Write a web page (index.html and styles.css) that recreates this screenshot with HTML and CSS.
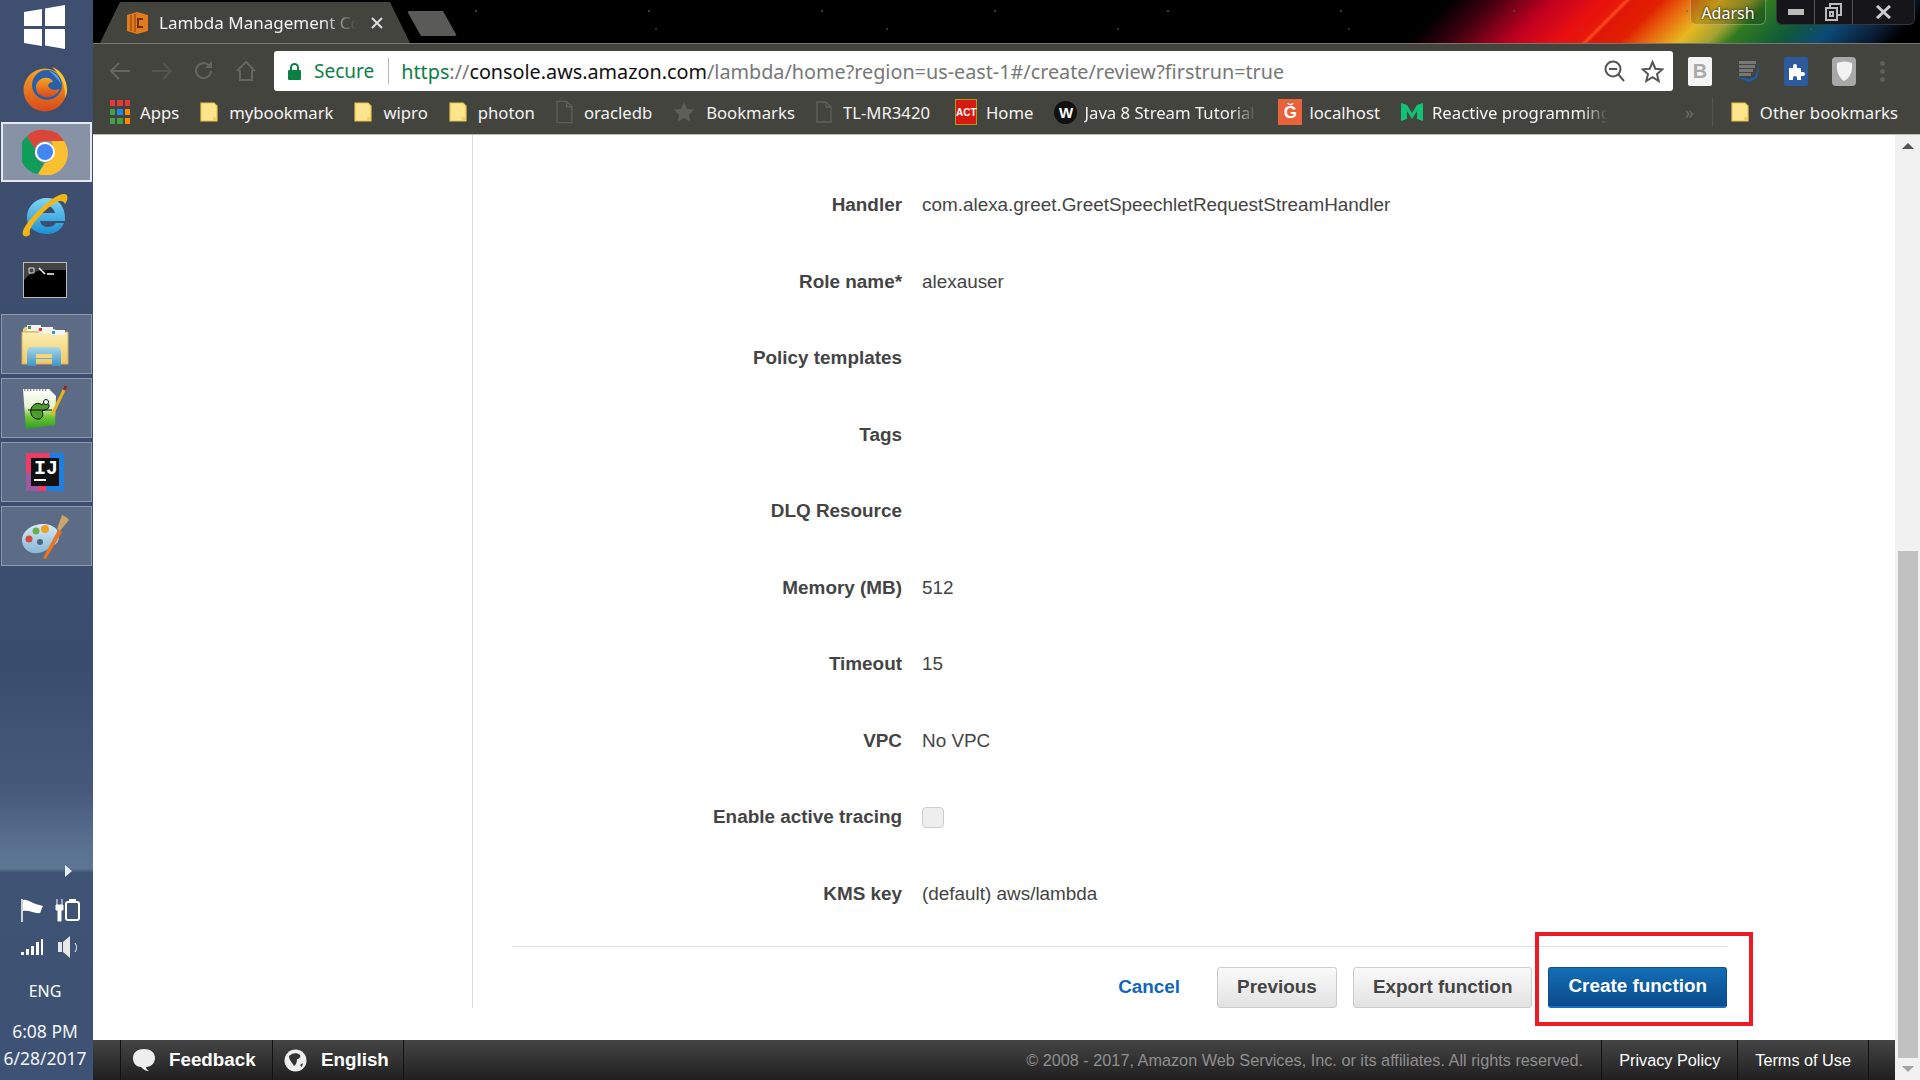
FILE: index.html
```html
<!DOCTYPE html>
<html lang="en">
<head>
<meta charset="utf-8">
<title>Lambda Management Console</title>
<link rel="stylesheet" href="styles.css">
</head>
<body>
<svg class="defs" width="0" height="0" aria-hidden="true">
  <defs>
    <linearGradient id="fx" x1="0" y1="0" x2="0" y2="1"><stop offset="0" stop-color="#f5a623"/><stop offset="1" stop-color="#d9491c"/></linearGradient>
    <linearGradient id="ie" x1="0" y1="0" x2="0" y2="1"><stop offset="0" stop-color="#7fd6f5"/><stop offset="1" stop-color="#1c8fd6"/></linearGradient>
    <linearGradient id="np" x1="0" y1="0" x2="0" y2="1"><stop offset="0" stop-color="#ffffff"/><stop offset=".45" stop-color="#e4f4cf"/><stop offset=".7" stop-color="#6cc52f"/><stop offset="1" stop-color="#2f9a2a"/></linearGradient>
    <linearGradient id="fd" x1="0" y1="0" x2="0" y2="1"><stop offset="0" stop-color="#fbeeb2"/><stop offset="1" stop-color="#efc968"/></linearGradient>
    <linearGradient id="gl" x1="0" y1="0" x2="0" y2="1"><stop offset="0" stop-color="#a8d8ea"/><stop offset="1" stop-color="#3f94c6"/></linearGradient>
    <linearGradient id="pa" x1="0" y1="0" x2="0" y2="1"><stop offset="0" stop-color="#d8ecf7"/><stop offset="1" stop-color="#86b6d6"/></linearGradient>
  </defs>
  <symbol id="folder" viewBox="0 0 18 20"><path d="M1 1h13l3 3v15H1z" fill="#fde58d" stroke="#e9c24e" stroke-width="1.2"/><path d="M13 19v-4h4v4z" fill="#f3cf62"/></symbol>
  <symbol id="doc" viewBox="0 0 16 22"><path d="M1 1h9l5 5v15H1zM10 1v5h5" fill="none" stroke="#5f5f5a" stroke-width="1.3"/></symbol>
</svg>
<div class="desktop">
  <aside class="dock">
    <div class="dock-item first">
      <svg width="44" height="44" viewBox="0 0 44 44"><path d="M1 7l18-3v17H1zM22 3.500L42 0v21H22zM1 24h18v17L1 38zM22 24h20v20l-20-3.500z" fill="#fff"/></svg>
    </div>
    <div class="dock-item">
      <svg width="46" height="54" viewBox="0 0 46 54">
        <circle cx="23" cy="29" r="21.500" fill="url(#fx)"/>
        <circle cx="25" cy="24" r="15" fill="#2a5fa8"/>
        <path d="M27 10c6 1 11 6 12 13-3-5-7-9-12-13z" fill="#5f9fe0"/>
        <path d="M22 17c5-1 8 1 9 4-3 0-5 2-5 4 2 4 7 5 12 3-3 6-9 9-15 8-6-1-9-5-9-10 0-4 3-8 8-9z" fill="url(#fx)"/>
        <path d="M30 6c9 3 15 12 15 23 0 3-1 6-2 8 1-12-4-23-13-31z" fill="#fcc72f"/>
      </svg>
    </div>
    <div class="dock-item tile active">
      <svg width="46" height="46" viewBox="0 0 46 46">
        <path d="M23 1a22 22 0 0 1 19 11H23a11 11 0 0 0-10.500 7.500L5 7A22 22 0 0 1 23 1z" fill="#db4437"/>
        <path d="M5 7l8 13a11 11 0 0 0 9 14l-6 11A22 22 0 0 1 5 7z" fill="#0f9d58"/>
        <path d="M42 12a22 22 0 0 1-26 33l7-11a11 11 0 0 0 8-14 11 11 0 0 0-2-8z" fill="#fbc02d"/>
        <circle cx="23" cy="23" r="10" fill="#fff"/><circle cx="23" cy="23" r="8" fill="#4285f4"/>
      </svg>
    </div>
    <div class="dock-item">
      <svg width="46" height="46" viewBox="0 0 46 46">
        <path d="M5 25C5 13 14 5 25 5c11 0 18 8 18 20v3H18c1 4 4 6 8 6 3 0 6-1 8-4h8c-3 7-9 11-16 11C14 41 5 35 5 25zM18 20h15c-1-4-4-7-8-7s-6 3-7 7z" fill="url(#ie)"/>
        <path d="M1 42C-3 34 30 1 42 1c5 0 4 6 1 10-2-5-8-4-18 5C14 26 6 36 8 41c-1 3-6 3-7 1z" fill="#f2b616"/>
      </svg>
    </div>
    <div class="dock-item">
      <svg width="44" height="36" viewBox="0 0 44 36"><rect x=".5" y=".5" width="43" height="35" fill="#000" stroke="#bbb"/><path d="M1 1h42v7H20C12 9 6 12 1 18z" fill="#444"/><path d="M16 6l6 6" stroke="#fff" stroke-width="1.500"/><path d="M24 12h7" stroke="#fff" stroke-width="1.500"/><path d="M6 6h5v5H6z" fill="none" stroke="#ddd"/></svg>
    </div>
    <div class="dock-item tile">
      <svg width="48" height="46" viewBox="0 0 48 46">
        <path d="M2 8l2-2h12l2 2h16l2 3H2z" fill="#e9cd83"/>
        <path d="M1 11h46v32H1z" fill="url(#fd)" stroke="#d2ae5e"/>
        <path d="M6 4h14v6H6zM18 6h14v6H18zM30 9h14v5H30z" fill="#f4f4f4"/>
        <path d="M7 5h3v3H7z" fill="#3c9a3c"/><path d="M18 7h3v3h-3z" fill="#d33"/><path d="M31 10h3v3h-3z" fill="#39c"/>
        <path d="M6 45V31c0-3 2-5 5-5h24c3 0 5 2 5 5v14h-9v-7H15v7z" fill="url(#gl)"/>
        <path d="M15 37h16v-4H15z" fill="#f2d77c"/>
      </svg>
    </div>
    <div class="dock-item tile">
      <svg width="46" height="46" viewBox="0 0 46 46">
        <path d="M1 4h26l7 7-1 29-29 4z" fill="url(#np)"/>
        <path d="M2 5h24" stroke="#777" stroke-width="1.500" stroke-dasharray="1.500 1.500"/>
        <path d="M9 24c2-6 8-7 11-4 1-4 8-3 7 2-1 3-5 3-7 4 2 4 0 9-5 8-5-1-7-5-6-10z" fill="#4b9b2e" stroke="#111"/>
        <circle cx="24" cy="17" r="2.500" fill="#fff" stroke="#111"/><path d="M6 25h24" stroke="#111"/>
        <path d="M30 30L43 3" stroke="#e8b417" stroke-width="3"/><path d="M42 5l2-4" stroke="#8a2a2a" stroke-width="3"/>
      </svg>
    </div>
    <div class="dock-item tile">
      <svg width="38" height="38" viewBox="0 0 38 38">
        <path d="M0 0h24v10H38v28H12l-12-2z" fill="#ee3b68"/><path d="M24 0h14v38H20z" fill="#1f7fe0"/><path d="M0 20h12v18H0z" fill="#9a5aa0"/>
        <rect x="5" y="5" width="28" height="28" fill="#111"/>
        <rect x="8" y="26" width="12" height="2" fill="#fff"/>
        <text x="8" y="21" class="ij-text">IJ</text>
      </svg>
    </div>
    <div class="dock-item tile">
      <svg width="48" height="48" viewBox="0 0 48 48">
        <path d="M1 28c0-10 12-17 23-16 8 1 14 5 14 12 0 9-6 9-10 12-3 3-9 6-16 5C6 40 1 35 1 28z" fill="url(#pa)"/>
        <circle cx="8" cy="27" r="3.500" fill="#d84a3a"/><circle cx="15" cy="19" r="3.500" fill="#6ab04a"/><circle cx="24" cy="17" r="4" fill="#f0a020"/><circle cx="19" cy="30" r="3" fill="#4d6680"/>
        <path d="M22 46l15-28 4 2-16 27z" fill="#e9761c"/><path d="M36 17l5-14c3 1 6 3 7 5l-9 11z" fill="#c9a56b"/>
      </svg>
    </div>
    <div class="sys">
      <div class="sys-arrow"></div>
      <div class="tray">
        <svg width="24" height="24" viewBox="0 0 24 24"><path d="M2 1v23" stroke="#fff" stroke-width="1.500"/><path d="M3 2c5-1 9 4 20 6-2 3-2 6-3 7-5 1-10-3-17-2z" fill="#fff"/></svg>
        <svg width="26" height="24" viewBox="0 0 26 24"><path d="M2 1v6M7 1v6M1 7h7v5H6v11H3V12H1z" fill="#fff" stroke="#fff" stroke-width="1"/><rect x="11" y="4" width="13" height="18" rx="2" fill="none" stroke="#fff" stroke-width="2"/><path d="M14 1h7v3h-7z" fill="#fff"/></svg>
        <svg width="24" height="18" viewBox="0 0 24 18"><path d="M1 14h3v3H1zM6 11h3v6H6zM11 8h3v9h-3zM16 4h3v13h-3zM21 1h2v16h-2z" fill="#fff"/></svg>
        <svg width="22" height="24" viewBox="0 0 22 24"><path d="M1 7h4v10H1zM6 7l7-6v22l-7-6z" fill="#e8e8e8"/><path d="M18 8c2 3 2 6 0 9" stroke="#fff" fill="none"/></svg>
      </div>
      <div class="lang">ENG</div>
      <div class="clock">6:08 PM</div>
      <div class="clock">6/28/2017</div>
    </div>
  </aside>

  <main class="browser">
    <header class="titlebar">
      <div class="tab">
        <svg class="tab-icon" width="21" height="22" viewBox="0 0 21 22"><path d="M0 3l10-3 11 3v16l-11 3-10-3z" fill="#e07b1f"/><path d="M4 3v16M8 2v18" stroke="#a9530f" stroke-width="1.500"/><path d="M16 7h-5v8h5" stroke="#6b3208" stroke-width="2" fill="none"/></svg>
        <span class="tab-title">Lambda Management Console</span>
        <svg class="tab-close" width="12" height="12" viewBox="0 0 12 12"><path d="M1 1l10 10M11 1L1 11" stroke="#ddd" stroke-width="2"/></svg>
      </div>
      <div class="newtab"></div>
      <div class="user">Adarsh</div>
      <div class="winctl">
        <div class="win-btn"><svg width="16" height="6" viewBox="0 0 16 6"><rect width="16" height="6" fill="#bbb"/></svg></div>
        <div class="win-btn"><svg width="17" height="18" viewBox="0 0 17 18"><path d="M5 4V1h11v11h-3M1 5h11v12H1zM5 9h3v4H5z" fill="none" stroke="#bbb" stroke-width="2"/></svg></div>
        <div class="win-btn wide"><svg width="15" height="14" viewBox="0 0 15 14"><path d="M1 1l13 12M14 1L1 13" stroke="#ccc" stroke-width="3"/></svg></div>
      </div>
    </header>

    <div class="toolbar">
      <div class="nav-btn"><svg width="20" height="18" viewBox="0 0 20 18"><path d="M20 9H2M9 1L1 9l8 8" fill="none" stroke="#66665f" stroke-width="2"/></svg></div>
      <div class="nav-btn"><svg width="20" height="18" viewBox="0 0 20 18"><path d="M0 9h18M11 1l8 8-8 8" fill="none" stroke="#55554f" stroke-width="2"/></svg></div>
      <div class="nav-btn"><svg width="20" height="20" viewBox="0 0 20 20"><path d="M17 10a7.500 7.500 0 1 1-2-5.500" fill="none" stroke="#66665f" stroke-width="2"/><path d="M18 0v7h-7z" fill="#66665f"/></svg></div>
      <div class="nav-btn"><svg width="20" height="20" viewBox="0 0 20 20"><path d="M1 10l9-9 9 9M4 9v10h12V9" fill="none" stroke="#66665f" stroke-width="2"/></svg></div>
      <div class="omnibox">
        <svg class="lock" width="13" height="17" viewBox="0 0 13 17"><path d="M3 7V4.500a3.500 3.500 0 0 1 7 0V7" fill="none" stroke="#0b8043" stroke-width="2"/><rect y="7" width="13" height="10" rx="1" fill="#0b8043"/></svg>
        <span class="secure">Secure</span>
        <span class="omni-sep"></span>
        <span class="url"><span class="u-https">https</span><span class="u-dim">://</span><span class="u-host">console.aws.amazon.com</span><span class="u-dim">/lambda/home?region=us-east-1#/create/review?firstrun=true</span></span>
        <svg class="omni-zoom" width="21" height="22" viewBox="0 0 21 22"><circle cx="9" cy="9" r="7.500" fill="none" stroke="#555" stroke-width="2"/><path d="M5 9h8M14 14l6 7" stroke="#555" stroke-width="2"/></svg>
        <svg class="omni-star" width="23" height="23" viewBox="0 0 23 23"><path d="M11.500 2l2.800 6.700 7.200.6-5.500 4.700 1.700 7-6.200-3.800L5.300 21 7 14 1.500 9.300l7.200-.6z" fill="none" stroke="#555" stroke-width="2"/></svg>
      </div>
      <div class="exts">
        <div class="ext ext-b">B</div>
        <svg width="24" height="26" viewBox="0 0 24 26"><path d="M3 3h17v3H3zM3 7h16v3H3zM3 11h14v3H3zM3 15h12v3H3z" fill="#777"/><path d="M0 19l13 5 8-4 3-15-5 14-6 2z" fill="#1460b0"/></svg>
        <div class="ext ext-puzzle"><svg width="20" height="20" viewBox="0 0 20 20"><path d="M3 7h4V5a2 2 0 0 1 4 0v2h4v4h2a2 2 0 0 1 0 4h-2v4h-4v-2a2 2 0 0 0-4 0v2H3z" fill="#fff"/></svg></div>
        <div class="ext ext-shield"><svg width="18" height="22" viewBox="0 0 18 22"><path d="M2 3c5-2 10-2 15 0 1 8-2 15-8 18C4 18 1 11 2 3z" fill="#f2f2f2"/></svg></div>
        <div class="menu-dots"><i></i><i></i><i></i></div>
      </div>
    </div>

    <nav class="bookmarks">
      <div class="bm apps"><svg width="20" height="24" viewBox="0 0 20 24"><path d="M0 0h5v6H0zM7 0h6v6H7zM15 0h5v6h-5z" fill="#e53935"/><path d="M0 9h5v6H0z" fill="#43a047"/><path d="M7 9h6v6H7z" fill="#1e88e5"/><path d="M15 9h5v6h-5z" fill="#fb8c00"/><path d="M0 18h5v6H0zM7 18h6v6H7z" fill="#43a047"/><path d="M15 18h5v6h-5z" fill="#fb8c00"/></svg><span>Apps</span></div>
      <div class="bm"><svg width="18" height="26"><use href="#folder"/></svg><span>mybookmark</span></div>
      <div class="bm"><svg width="18" height="26"><use href="#folder"/></svg><span>wipro</span></div>
      <div class="bm"><svg width="18" height="26"><use href="#folder"/></svg><span>photon</span></div>
      <div class="bm"><svg width="17" height="24"><use href="#doc"/></svg><span>oracledb</span></div>
      <div class="bm"><svg width="22" height="22" viewBox="0 0 22 22"><path d="M11 1l3 7 7.500.6-5.700 4.900L17.500 21 11 17l-6.500 4 1.700-7.500L.5 8.600 8 8z" fill="#5e5e5a"/></svg><span>Bookmarks</span></div>
      <div class="bm spaced"><svg width="16" height="24"><use href="#doc"/></svg><span>TL-MR3420</span></div>
      <div class="bm tight"><span class="fav-act">ACT</span><span>Home</span></div>
      <div class="bm tighter"><span class="fav-w">W</span><span class="fade fade-java">Java 8 Stream Tutorial</span></div>
      <div class="bm tighter"><span class="fav-g">Ğ</span><span>localhost</span></div>
      <div class="bm tight"><svg width="22" height="20" viewBox="0 0 22 20"><path d="M0 1l6 2 5 8 5-8 6-2v18l-6-2V9l-5 8-5-8v8l-6 2z" fill="#12c274"/></svg><span class="fade fade-react">Reactive programming</span></div>
      <div class="bm-more">»</div>
      <div class="bm other"><svg width="18" height="26"><use href="#folder"/></svg><span>Other bookmarks</span></div>
    </nav>

    <div class="viewport">
      <div class="page">
        <div class="content">
          <section class="panel">
            <div class="row"><div class="label">Handler</div><div class="value">com.alexa.greet.GreetSpeechletRequestStreamHandler</div></div>
            <div class="row"><div class="label">Role name*</div><div class="value">alexauser</div></div>
            <div class="row"><div class="label">Policy templates</div><div class="value"></div></div>
            <div class="row"><div class="label">Tags</div><div class="value"></div></div>
            <div class="row"><div class="label">DLQ Resource</div><div class="value"></div></div>
            <div class="row"><div class="label">Memory (MB)</div><div class="value">512</div></div>
            <div class="row"><div class="label">Timeout</div><div class="value">15</div></div>
            <div class="row"><div class="label">VPC</div><div class="value">No VPC</div></div>
            <div class="row"><div class="label">Enable active tracing</div><div class="value"><span class="checkbox"></span></div></div>
            <div class="row"><div class="label">KMS key</div><div class="value">(default) aws/lambda</div></div>
            <div class="actions">
              <a class="cancel">Cancel</a>
              <button class="btn">Previous</button>
              <button class="btn">Export function</button>
              <span class="highlight"><button class="btn primary">Create function</button></span>
            </div>
          </section>
        </div>
        <footer class="footer">
          <div class="foot-item"><svg width="24" height="24" viewBox="0 0 24 24"><path d="M1 10C1 4 6 1 12 1s11 3 11 9-5 9-9 9c0 2 2 3 3 4-4 0-6-2-8-4-4 0-8-3-8-9z" fill="#eee"/></svg><span>Feedback</span></div>
          <div class="foot-item lang-item"><svg width="23" height="23" viewBox="0 0 23 23"><circle cx="11.500" cy="11.500" r="11" fill="#eee"/><path d="M5 7c3-3 8-4 11-1 1 2-1 4-3 4 0 3-1 6-3 7-1-3-5-5-5-10zM16 16l3-2-1 4z" fill="#333"/></svg><span>English</span></div>
          <div class="copyright">© 2008 - 2017, Amazon Web Services, Inc. or its affiliates. All rights reserved.</div>
          <a class="foot-link">Privacy Policy</a>
          <a class="foot-link last">Terms of Use</a>
        </footer>
      </div>
      <div class="scrollbar">
        <div class="sb-arrow up"></div>
        <div class="sb-track"><div class="sb-thumb"></div></div>
        <div class="sb-arrow down"></div>
      </div>
    </div>
  </main>
</div>
</body>
</html>
```

FILE: styles.css
```css
* { box-sizing: border-box; }
html, body { margin: 0; height: 100%; overflow: hidden; }
body { font-family: "Liberation Sans", Arial, sans-serif; background: #fff; }
.defs { position: absolute; }
.desktop { display: flex; width: 1920px; height: 1080px; }

/* dock */
.dock {
  width: 93px; flex: none; display: flex; flex-direction: column; gap: 4px; overflow: hidden;
  font-family: "Noto Sans", sans-serif; color: #fff;
  background: linear-gradient(180deg, #3e4f6f 0, #3b4d6e 62%, #46597a 73%, #5b7392 79%, #5d7593 80.4%, #3f5474 80.8%, #3d5274 100%);
}
.dock-item { height: 60px; flex: none; display: flex; align-items: center; justify-content: center; padding-right: 3px; }
.dock-item.first { height: 54px; }
.tile { margin: 0 1px; background: rgba(255,255,255,.17); border: 1px solid rgba(255,255,255,.32); }
.tile.active { background: rgba(255,255,255,.38); border: 2px solid #e4e8ee; }
.ij-text { font: bold 20px "Liberation Mono", monospace; fill: #fff; }
.sys { margin-top: auto; padding-right: 3px; display: flex; flex-direction: column; align-items: center; }
.sys-arrow { width: 0; height: 0; margin: 0 0 14px 47px; border-left: 7px solid #e8edf3; border-top: 6px solid transparent; border-bottom: 6px solid transparent; }
.tray { display: grid; grid-template-columns: 36px 36px; grid-auto-rows: 37px; place-items: center; margin-left: 10px; }
.lang { font-size: 16px; line-height: 22px; margin-top: 15px; margin-bottom: 16px; }
.clock { font-size: 17.500px; line-height: 27px; white-space: nowrap; color: #f2f4f7; }
.clock:last-child { margin-bottom: 8px; }

/* browser chrome */
.browser { flex: 1; min-width: 0; display: flex; flex-direction: column; font-family: "Noto Sans", sans-serif; }
.titlebar {
  height: 43px; flex: none; display: flex; align-items: flex-start; overflow: hidden; color: #fff;
  background:
    radial-gradient(circle at 37px 11px, #666 0, #666 .5px, transparent 1px) 0 0 / 173px 43px,
    radial-gradient(circle at 101px 29px, #555 0, #555 .5px, transparent 1px) 0 0 / 231px 43px,
    linear-gradient(135deg, #000 960px, #3a0010 988px, #c00020 1032px, #e81010 1066px, #e81808 1082px, #ff4a20 1085px, #e01808 1088px, #e02000 1109px, #e87010 1130px, #e8b820 1151px, #a0a030 1172px, #307a20 1186px, #0e5a3a 1222px, #0c4a78 1250px, #0a1a30 1285px, #000 1303px);
}
.tab {
  width: 310px; height: 41px; margin: 2px 0 0 7px; flex: none; display: flex; align-items: center; padding: 0 0 0 27px;
  background: #44443e; clip-path: polygon(0 100%, 20px 0, 290px 0, 100% 100%);
}
.tab-icon { flex: none; }
.tab-title {
  width: 198px; margin-left: 11px; font-size: 17px; white-space: nowrap; overflow: hidden; color: #f2f2f2;
  -webkit-mask-image: linear-gradient(90deg, #000 82%, transparent);
  mask-image: linear-gradient(90deg, #000 82%, transparent);
}
.tab-close { margin-left: 14px; flex: none; }
.newtab { width: 50px; height: 25px; margin: 11px 0 0 -3px; flex: none; background: #5a5a58; clip-path: polygon(0 0, 36px 0, 100% 100%, 14px 100%); border-radius: 3px; }
.user { width: 76px; height: 25px; margin-left: auto; flex: none; text-align: center; font-size: 16px; line-height: 26px; border: 1px solid rgba(255,255,255,.3); border-top: 0; border-radius: 0 0 6px 6px; text-shadow: 0 0 3px #000; background: rgba(0,0,0,.18); }
.winctl { width: 139px; height: 25px; margin: 0 5px 0 10px; flex: none; display: flex; background: #16161a; border: 1px solid #33373f; border-top: 0; border-radius: 0 0 6px 6px; }
.win-btn { width: 38px; display: flex; align-items: center; justify-content: center; border-right: 1px solid #555; }
.win-btn.wide { flex: 1; border-right: 0; }

.toolbar { height: 49px; flex: none; display: flex; align-items: flex-start; padding: 7px 0 0 6px; background: #44443e; border-top: 1px solid #77776f; }
.nav-btn { width: 42px; height: 40px; flex: none; display: flex; align-items: center; justify-content: center; }
.omnibox { width: 1399px; height: 40px; margin-left: 7px; flex: none; display: flex; align-items: center; padding-left: 14px; background: #fff; border-radius: 3px; }
.lock { flex: none; }
.secure { margin-left: 13px; font-size: 19px; color: #0b8043; }
.omni-sep { width: 1px; height: 26px; margin: 0 12px 0 14px; background: #b5b5b5; }
.url { font-size: 19.800px; white-space: nowrap; }
.u-https { color: #0b8043; }
.u-dim { color: #777; }
.u-host { color: #111; }
.omni-zoom { margin-left: auto; flex: none; }
.omni-star { margin: 0 9px 0 16px; flex: none; }
.exts { flex: 1; height: 40px; display: flex; align-items: center; padding-left: 15px; }
.exts > * { flex: none; margin-right: 24px; }
.ext { width: 24px; height: 29px; display: flex; align-items: center; justify-content: center; border-radius: 2px; }
.ext-b { background: #f4f4f4; color: #aaa; font: bold 20px "Liberation Sans", sans-serif; }
.ext-puzzle { background: #2c5a9c; }
.ext-shield { background: #a8a8a8; border-radius: 4px; }
.menu-dots { display: flex; flex-direction: column; gap: 3px; margin-right: 0; }
.menu-dots i { width: 5px; height: 5px; border-radius: 50%; background: #5f5f59; }

.bookmarks { height: 43px; flex: none; display: flex; align-items: center; gap: 21px; padding: 0 22px 2px 17px; background: #44443e; font-size: 16.700px; color: #f3f3f3; border-bottom: 1px solid #bbb; }
.bm { display: flex; align-items: center; gap: 11px; white-space: nowrap; flex: none; }
.bm.apps { gap: 10px; }
.bm.spaced { margin-right: 4px; }
.bm.tight { gap: 9px; }
.bm.tighter { gap: 7px; }
.bm > svg { flex: none; }
.fade { display: block; overflow: hidden; -webkit-mask-image: linear-gradient(90deg, #000 85%, transparent); mask-image: linear-gradient(90deg, #000 85%, transparent); }
.fade-java { width: 173px; }
.fade-react { width: 176px; }
.fav-act { width: 22px; height: 26px; background: #d8190f; color: #fff; font: bold 10px/26px "Liberation Sans", sans-serif; text-align: center; border: 1px solid #a99a20; }
.fav-w { width: 23px; height: 23px; border-radius: 50%; background: #111; color: #fff; font: bold 15px/23px "Liberation Sans", sans-serif; text-align: center; }
.fav-g { width: 24px; height: 26px; background: #e8623a; color: #fff; font: bold 17px/27px "Liberation Sans", sans-serif; text-align: center; }
.bm-more { margin-left: auto; color: #6b6b65; font-size: 18px; }
.other { margin-left: -3px; padding-left: 18px; border-left: 1px solid #53534d; height: 30px; }

/* page */
.viewport { flex: 1; min-height: 0; display: flex; }
.page { flex: 1; min-width: 0; display: flex; flex-direction: column; }
.content { flex: 1; min-height: 0; padding-left: 379px; overflow: hidden; }
.panel { width: 1255px; height: 873px; padding: 32px 0 0 39px; border-left: 1px solid #ddd; color: #444; font-family: "Liberation Sans", Arial, sans-serif; font-size: 18.900px; }
.row { height: 76.500px; display: flex; align-items: center; gap: 20px; }
.label { width: 390px; flex: none; text-align: right; font-weight: bold; }
.value { flex: 1; display: flex; align-items: center; }
.checkbox { width: 22px; height: 21px; background: #eee; border: 1px solid #ccc; border-radius: 4px; }
.actions { margin-top: 14px; padding-top: 20px; border-top: 1px solid #ddd; display: flex; align-items: center; justify-content: flex-end; }
.cancel { margin: 0 37px 2px 0; color: #1166bb; font-weight: bold; font-size: 18.900px; }
.btn { height: 41px; padding: 0 19px 2px; font: bold 18.900px "Liberation Sans", sans-serif; color: #444; border: 1px solid #ccc; border-radius: 3px; background: linear-gradient(#fafafa, #e2e2e2); margin-right: 16px; }
.highlight { position: relative; display: block; }
.highlight::after { content: ""; position: absolute; left: -13px; right: -26px; top: -35px; bottom: -18px; border: 4.500px solid #ed1c24; pointer-events: none; }
.btn.primary { margin-right: 0; color: #fff; border-color: #0f4f92; border-bottom: 2px solid #1a6ac0; background: linear-gradient(#146eb4, #0b4a8c); }

.footer { height: 40px; flex: none; display: flex; align-items: stretch; padding-left: 27px; background: linear-gradient(#454545, #1f1f1f); color: #fff; font-family: "Liberation Sans", sans-serif; }
.foot-item { width: 152px; display: flex; align-items: center; gap: 13px; padding-left: 11px; border-left: 1px solid #111; font-weight: bold; font-size: 18.800px; }
.lang-item { width: 132px; border-right: 1px solid #111; gap: 14px; }
.copyright { margin-left: auto; align-self: center; padding-right: 18px; font-size: 16.250px; color: #8f8f8f; white-space: nowrap; }
.foot-link { display: flex; align-items: center; padding: 0 17px; border-left: 1px solid #111; font-size: 16.250px; white-space: nowrap; }
.foot-link.last { border-right: 1px solid #111; margin-right: 26px; }

.scrollbar { width: 25px; flex: none; display: flex; flex-direction: column; background: #f1f1f1; }
.sb-arrow { height: 22px; flex: none; position: relative; }
.sb-arrow::after { content: ""; position: absolute; left: 7px; width: 0; height: 0; border-left: 6px solid transparent; border-right: 6px solid transparent; }
.sb-arrow.up::after { top: 8px; border-bottom: 6px solid #555; }
.sb-arrow.down::after { bottom: 8px; border-top: 6px solid #a3a3a3; }
.sb-track { flex: 1; padding: 394px 2px 0 3px; }
.sb-thumb { height: 507px; background: #c1c1c1; }
```
